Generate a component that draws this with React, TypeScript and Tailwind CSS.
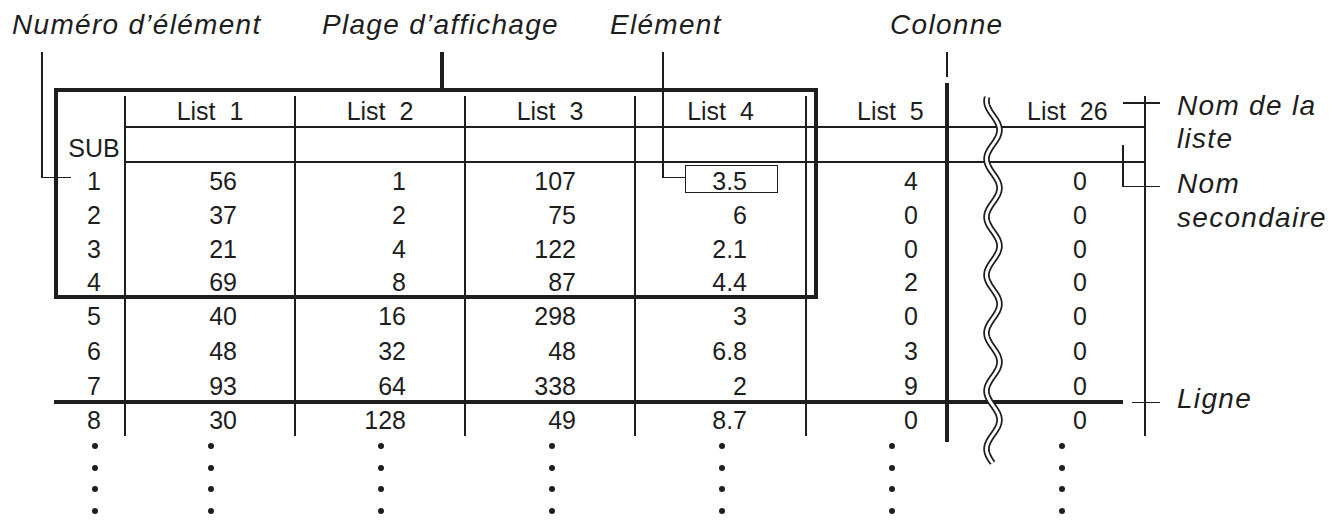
const ink = "bg-[#1e1e1e]";

const cols = [
  { w: "w-[69px]", head: "", headCls: "", cell: "justify-center pl-[9px]", dot: "pl-[37px]", edge: "" },
  { w: "w-[170px]", head: "List  1", headCls: "justify-center", cell: "justify-end pr-[57px]", dot: "pl-[84px]", edge: "border-l-2" },
  { w: "w-[170px]", head: "List  2", headCls: "justify-center", cell: "justify-end pr-[58px]", dot: "pl-[84px]", edge: "border-l-2" },
  { w: "w-[170px]", head: "List  3", headCls: "justify-center", cell: "justify-end pr-[58px]", dot: "pl-[85px]", edge: "border-l-2" },
  { w: "w-[171px]", head: "List  4", headCls: "justify-center", cell: "justify-end pr-[58px]", dot: "pl-[85px]", edge: "border-l-2" },
  { w: "w-[142px]", head: "List  5", headCls: "justify-start pl-[50px]", cell: "justify-end pr-[29px]", dot: "pl-[84px]", edge: "border-l-2" },
  { w: "w-[199px]", head: "List  26", headCls: "justify-start pl-[78px]", cell: "justify-end pr-[57px]", dot: "pl-[112px]", edge: "border-x-2" },
];

const rows = [
  { h: "h-[34px]", v: ["1", "56", "1", "107", "3.5", "4", "0"] },
  { h: "h-[34px]", v: ["2", "37", "2", "75", "6", "0", "0"] },
  { h: "h-[34px]", v: ["3", "21", "4", "122", "2.1", "0", "0"] },
  { h: "h-[33px]", v: ["4", "69", "8", "87", "4.4", "2", "0"] },
  { h: "h-[35px]", v: ["5", "40", "16", "298", "3", "0", "0"] },
  { h: "h-[35px]", v: ["6", "48", "32", "48", "6.8", "3", "0"] },
  { h: "h-[34px]", v: ["7", "93", "64", "338", "2", "9", "0"] },
  { h: "h-[34px]", v: ["8", "30", "128", "49", "8.7", "0", "0"] },
];

const topLabels = [
  { text: "Numéro d’élément", w: "w-[310px]" },
  { text: "Plage d’affichage", w: "w-[288px]" },
  { text: "Elément", w: "w-[280px]" },
  { text: "Colonne", w: "" },
];

function wavePath() {
  const pts: string[] = [];
  for (let y = 97; y <= 463; y += 2) {
    const x = 993 + 6.5 * Math.sin((2 * Math.PI * (y - 115.5)) / 58);
    pts.push(`${(x - 975).toFixed(2)},${(y - 90).toFixed(2)}`);
  }
  return "M" + pts.join(" L");
}

const label = "whitespace-pre text-[28px] italic tracking-[1.3px]";

export default function App() {
  const d = wavePath();

  return (
    <div className="relative flex h-[526px] w-[1332px] flex-col overflow-hidden bg-white font-['Liberation_Sans',Arial,sans-serif] text-[#1e1e1e]">
      {/* labels above the table */}
      <div className={`flex pl-[12px] pt-[11px] leading-[28px] ${label}`}>
        {topLabels.map((l) => (
          <div key={l.text} className={l.w}>
            {l.text}
          </div>
        ))}
      </div>

      <div className="mt-[49px] flex">
        {/* table */}
        <div className="ml-[55px] pt-[8px] text-[25px] leading-none">
          <div className="flex h-[32px]">
            {cols.map((c, i) => (
              <div key={i} className={`${c.w} ${c.edge} ${i > 0 ? "border-b-2" : ""} flex items-center whitespace-pre border-[#1e1e1e] pt-[1px] ${c.headCls}`}>
                {c.head}
              </div>
            ))}
          </div>
          <div className="flex h-[35px]">
            {cols.map((c, i) => (
              <div key={i} className={`${c.w} ${c.edge} ${i > 0 ? "border-b-2" : ""} flex items-center border-[#1e1e1e] pt-[5px] ${c.cell}`}>
                {i === 0 ? "SUB" : ""}
              </div>
            ))}
          </div>
          {rows.map((r) => (
            <div key={r.v[0]} className={`flex ${r.h}`}>
              {cols.map((c, i) => (
                <div key={i} className={`${c.w} ${c.edge} flex items-center border-[#1e1e1e] pt-[2px] ${c.cell}`}>
                  {r.v[i]}
                </div>
              ))}
            </div>
          ))}
          <div className="flex pt-[7px]">
            {cols.map((c, i) => (
              <div key={i} className={`${c.w} ${c.dot} flex flex-col gap-[15.5px]`}>
                {[0, 1, 2, 3].map((k) => (
                  <span key={k} className="block h-[6px] w-[6px] rounded-full bg-[#1e1e1e]" />
                ))}
              </div>
            ))}
          </div>
        </div>

        {/* labels to the right */}
        <div className={`ml-[31px] flex flex-col pt-[1px] ${label}`}>
          <div className="leading-[33px]">{"Nom de la\nliste"}</div>
          <div className="mt-[12px] leading-[34px]">{"Nom\nsecondaire"}</div>
          <div className="mt-[150px] leading-[28px]">Ligne</div>
        </div>
      </div>

      {/* highlights drawn over the table */}
      <div className="absolute left-[54px] top-[88px] h-[211px] w-[764px] border-4 border-[#1e1e1e]" />
      <div className={`absolute left-[945px] top-[83px] h-[359px] w-[4px] ${ink}`} />
      <div className={`absolute left-[54px] top-[400px] h-[4px] w-[1069px] ${ink}`} />
      <div className="absolute left-[685px] top-[165px] h-[28px] w-[93px] border-[1.5px] border-[#1e1e1e]" />

      <svg className="absolute left-[975px] top-[90px]" width="40" height="380" viewBox="0 0 40 380">
        <path d={d} fill="none" stroke="#1e1e1e" strokeWidth="6.5" />
        <path d={d} fill="none" stroke="#ffffff" strokeWidth="3" />
      </svg>

      {/* leader lines */}
      <div className={`absolute left-[41px] top-[52px] h-[126px] w-[1.5px] ${ink}`} />
      <div className={`absolute left-[41px] top-[176.5px] h-[1.5px] w-[30px] ${ink}`} />
      <div className={`absolute left-[440px] top-[52px] h-[38px] w-[4px] ${ink}`} />
      <div className={`absolute left-[662px] top-[52px] h-[126px] w-[1.5px] ${ink}`} />
      <div className={`absolute left-[662px] top-[176.5px] h-[1.5px] w-[23px] ${ink}`} />
      <div className={`absolute left-[945.5px] top-[52px] h-[25px] w-[2px] ${ink}`} />
      <div className={`absolute left-[1123px] top-[102px] h-[1.5px] w-[37px] ${ink}`} />
      <div className={`absolute left-[1122px] top-[145px] h-[42px] w-[1.5px] ${ink}`} />
      <div className={`absolute left-[1122px] top-[185.5px] h-[1.5px] w-[38px] ${ink}`} />
      <div className={`absolute left-[1132px] top-[401.5px] h-[1.5px] w-[28px] ${ink}`} />
    </div>
  );
}
